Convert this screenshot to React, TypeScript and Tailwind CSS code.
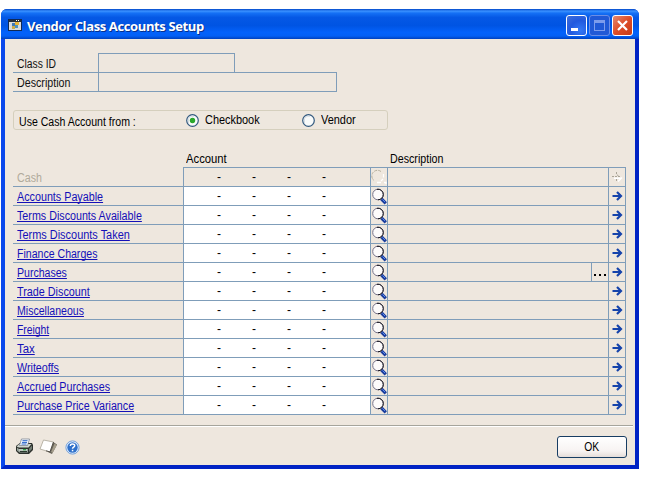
import React from "react";

const rows: { label: string; scale: string }[] = [
  { label: "Cash", scale: "scale-x-[0.89]" },
  { label: "Accounts Payable", scale: "scale-x-[0.896]" },
  { label: "Terms Discounts Available", scale: "scale-x-[0.893]" },
  { label: "Terms Discounts Taken", scale: "scale-x-[0.911]" },
  { label: "Finance Charges", scale: "scale-x-[0.88]" },
  { label: "Purchases", scale: "scale-x-[0.88]" },
  { label: "Trade Discount", scale: "scale-x-[0.9]" },
  { label: "Miscellaneous", scale: "scale-x-[0.88]" },
  { label: "Freight", scale: "scale-x-[0.86]" },
  { label: "Tax", scale: "scale-x-[0.95]" },
  { label: "Writeoffs", scale: "scale-x-[0.894]" },
  { label: "Accrued Purchases", scale: "scale-x-[0.894]" },
  { label: "Purchase Price Variance", scale: "scale-x-[0.893]" },
];

function Label({ text, scale = "scale-x-[0.89]" }: { text: string; scale?: string }) {
  return <span className={`inline-block origin-left ${scale}`}>{text}</span>;
}

function WindowIcon() {
  return (
    <svg width="14" height="12" viewBox="0 0 14 12" shapeRendering="crispEdges">
      <rect width="14" height="12" fill="#102a55" />
      <rect x="1" y="1" width="12" height="10" fill="#d8dce0" />
      <rect x="1" y="1" width="12" height="2" fill="#26303c" />
      <rect x="8" y="1" width="1" height="1" fill="#fff" />
      <rect x="10" y="1" width="1" height="1" fill="#fff" />
      <rect x="7" y="3" width="4" height="3" fill="#e8b437" />
      <rect x="4" y="4" width="3" height="3" fill="#3b78b8" />
      <rect x="4" y="7" width="3" height="3" fill="#c8ab4c" />
      <rect x="7" y="6" width="3" height="3" fill="#4b91c0" />
    </svg>
  );
}

function Lens({ disabled }: { disabled: boolean }) {
  if (disabled) {
    return (
      <svg width="16" height="18" viewBox="0 0 16 18" fill="none">
        <path d="M10 3.500A5.500 5.500 0 1 0 3 12.500" stroke="#b5ae9c" strokeDasharray="3 1" />
        <path d="M12.500 6v3.500M12 11l-2 2M6 14.500h4M13 14.500h2v1.500" stroke="#fff" strokeWidth="1.300" />
      </svg>
    );
  }
  return (
    <svg width="16" height="18" viewBox="0 0 16 18" fill="none">
      <path d="M10.500 12l4.300 4.300" stroke="#1b3d9c" strokeWidth="3.200" />
      <circle cx="7" cy="7.500" r="5.300" fill="#fdfbfb" stroke="#77738a" />
      <path d="M6 2.300a5.300 5.300 0 0 1 6.300 5.200a5.300 5.300 0 0 1-5.300 5.300" stroke="#15151d" />
      <path d="M11.500 12.500l2.500 2.500" stroke="#5b8cf0" strokeWidth="1" />
    </svg>
  );
}

function Arrow({ disabled }: { disabled: boolean }) {
  if (disabled) {
    return (
      <svg width="11" height="12" viewBox="0 0 11 12" fill="none">
        <path d="M2 7.200h7M6 10.500l4-4" stroke="#fff" strokeWidth="1.500" />
        <path d="M0 5.500h8M4.500 1v2.500l3 2M4.500 10v-2" stroke="#aaa598" strokeDasharray="2 1" />
      </svg>
    );
  }
  return (
    <svg width="11" height="10" viewBox="0 0 11 10" fill="none">
      <path d="M.5 5h8.500M5 1l4 4l-4 4" stroke="#1543ab" strokeWidth="2.200" />
    </svg>
  );
}

function Printer() {
  return (
    <svg width="19" height="17" viewBox="0 0 19 17">
      <path d="M1 8l4-3h12l1 2v5l-4 4H4l-3-3z" fill="#2c302c" />
      <path d="M1.500 8.500l3-2.500h12l-3 3.500H4z" fill="#cfd5cd" />
      <path d="M6.500 1h8l-2 6.500h-8z" fill="#f7faff" stroke="#5b6878" strokeWidth=".6" />
      <path d="M7.500 2.700h5M7 4.400h5M6.500 6h5" stroke="#2462c9" />
      <path d="M2 9.500l2 1.500h9v3.500H4.500L2 12.500z" fill="#98a39b" />
      <path d="M14 10.500l3-3v3.500l-3 3z" fill="#727d74" />
      <path d="M4 12h8" stroke="#e3e8e2" />
      <path d="M5 13.500h7" stroke="#2a382e" />
      <rect x="8" y="11" width="3" height="1.300" fill="#2ea647" />
    </svg>
  );
}

function Note() {
  return (
    <svg width="19" height="16" viewBox="0 0 19 16">
      <path d="M14 3l4 2.500l-5 9.500l-4-2z" fill="#625e54" />
      <path d="M15.500 4.500l2.500 1.500l-4.500 8l-1.500-1z" fill="#a59e8c" />
      <path d="M4.500 1l10 2l-3.500 10l-10-3z" fill="#fff" stroke="#a9a496" strokeWidth=".8" />
      <path d="M14.500 3l-3.500 10l-4-1.200" fill="none" stroke="#37342e" strokeWidth=".8" />
    </svg>
  );
}

function Help() {
  return (
    <svg width="15" height="15" viewBox="0 0 15 15" fill="none">
      <circle cx="7.500" cy="7.500" r="6.600" fill="#e4effc" stroke="#75a2dc" />
      <circle cx="7.500" cy="7.500" r="5.200" fill="#2f71cb" />
      <path d="M5.300 6c0-2.800 4.400-2.700 4.400-.3c0 1.500-2.200 1.300-2.200 3" stroke="#fff" strokeWidth="1.500" />
      <rect x="6.800" y="9.800" width="1.500" height="1.500" fill="#fff" />
    </svg>
  );
}

function TitleBar() {
  return (
    <header className="flex h-[30px] items-center bg-[linear-gradient(180deg,#0046c8_0%,#3a91ff_7%,#1470f5_14%,#0558e5_28%,#0054e3_55%,#0362fb_78%,#0360f5_90%,#0040bd_100%)] pr-[6px] pl-[7px]">
      <div className="mt-[2px]"><WindowIcon /></div>
      <h1 className="mt-[4px] ml-[5px] font-['Open_Sans','Noto_Sans',sans-serif] text-[13px] leading-[16px] font-bold tracking-[-0.37px] whitespace-nowrap text-white [text-shadow:1px_1px_0_#06308c]">
        Vendor Class Accounts Setup
      </h1>
      <div className="mt-[3px] ml-auto flex gap-[2px]">
        <div className="flex h-[21px] w-[21px] items-end rounded-[3px] border border-white bg-[radial-gradient(circle_at_70%_75%,#3478f5,#2159de_50%,#416fd9)]">
          <span className="mb-[4px] ml-[4px] h-[3px] w-[7px] bg-white" />
        </div>
        <div className="flex h-[21px] w-[21px] items-center justify-center rounded-[3px] border border-[#6c8ee5] bg-[#2159d6]">
          <span className="h-[11px] w-[11px] border border-t-[3px] border-[#7d9cec]" />
        </div>
        <div className="flex h-[21px] w-[21px] items-center justify-center rounded-[3px] border border-white bg-[linear-gradient(135deg,#e38a72,#de4d27_50%,#c63b18)]">
          <svg width="13" height="13" viewBox="0 0 13 13">
            <path d="M2 2l9 9M11 2l-9 9" stroke="#fff" strokeWidth="2.200" />
          </svg>
        </div>
      </div>
    </header>
  );
}

function Radio({ checked }: { checked: boolean }) {
  return (
    <svg width="13" height="13" viewBox="0 0 13 13">
      <circle cx="6.500" cy="6.500" r="5.800" fill="#f8fafa" stroke="#31587e" strokeWidth="1.200" />
      <path d="M2.500 9V4.500L5 2.300h3" fill="none" stroke="#d6dde3" />
      {checked && <circle cx="6.500" cy="6.500" r="2.700" fill="#2ba82b" />}
    </svg>
  );
}

export default function App() {
  return (
    <div className="h-[478px] w-[655px] overflow-hidden bg-white pt-[9px] pl-[1px] font-['Liberation_Sans',Arial,sans-serif] text-[12px] leading-[18px] whitespace-nowrap text-black">
      <div className="flex h-[460px] w-[638px] flex-col overflow-hidden rounded-t-[6px] bg-[#0034d0]">
        <TitleBar />
        <main className="flex flex-1 flex-col border-x-4 border-b-4 border-t-0 border-r-[#0023c4] border-b-[#0023c4] border-l-[#0a48ec] bg-[#eee7de]">
          <section className="mt-[14px] ml-[8px] text-[#111]">
            <div className="flex h-[20px]">
              <div className="w-[85px] border-b border-[#7f9db9] pt-[2px] pl-[4px]"><Label text="Class ID" scale="scale-x-[0.86]" /></div>
              <div className="w-[137px] border border-[#7f9db9]" />
              <div className="w-[102px] border-b border-[#7f9db9]" />
            </div>
            <div className="flex h-[19px]">
              <div className="w-[85px] border-b border-[#7f9db9] pt-[1px] pl-[4px]"><Label text="Description" /></div>
              <div className="w-[239px] border border-t-0 border-[#7f9db9]" />
            </div>
          </section>

          <section className="mt-[18px] ml-[8px] flex h-[20px] w-[375px] items-center rounded-[3px] border border-[#d5cfbd]">
            <span className="mt-[3px] w-[167px] pl-[5px]"><Label text="Use Cash Account from :" scale="scale-x-[0.88]" /></span>
            <span className="ml-[5px] flex w-[116px] items-center gap-[6px]"><Radio checked={true} /><Label text="Checkbook" scale="scale-x-[0.91]" /></span>
            <span className="flex items-center gap-[6px]"><Radio checked={false} /><Label text="Vendor" scale="scale-x-[0.91]" /></span>
          </section>

          <section className="mt-[20px] ml-[8px] w-[613px]">
            <div className="flex h-[17px]">
              <span className="w-[204px] pl-[173px]"><Label text="Account" scale="scale-x-[0.94]" /></span>
              <span className="ml-[173px]"><Label text="Description" /></span>
            </div>
            {rows.map(({ label, scale }, i) => {
              const top = i === 0 ? "h-[20px] border-t" : "h-[19px]";
              const cell = `${top} border-b border-r border-[#7f9db9]`;
              return (
                <div key={label} className="flex">
                  <div className={`w-[170px] border-b border-[#7f9db9] pl-[4px] ${i === 0 ? "h-[20px] pt-[2px] text-[#b0aa9b]" : "h-[19px] pt-[1px] text-[#1410b8] underline decoration-1 underline-offset-[1px] [text-decoration-skip-ink:none]"}`}>
                    <span className={`inline-block origin-left [text-decoration:inherit] ${scale}`}>{label}</span>
                  </div>
                  <div className={`${cell} flex w-[188px] border-l pl-[33px] ${i === 0 ? "" : "bg-white"}`}>
                    <span className="w-[35px]">-</span>
                    <span className="w-[35px]">-</span>
                    <span className="w-[35px]">-</span>
                    <span>-</span>
                  </div>
                  <div className={`${cell} w-[17px]`}><Lens disabled={i === 0} /></div>
                  <div className={`${cell} flex w-[221px] justify-end`}>
                    {i === 5 && (
                      <div className="flex w-[17px] items-end justify-center gap-[3px] border-l border-[#7f9db9] pb-[5px]">
                        <i className="h-[2px] w-[2px] bg-black" /><i className="h-[2px] w-[2px] bg-black" /><i className="h-[2px] w-[2px] bg-black" />
                      </div>
                    )}
                  </div>
                  <div className={`${cell} flex w-[17px] items-center justify-center`}><Arrow disabled={i === 0} /></div>
                </div>
              );
            })}
          </section>

          <footer className="mt-auto mr-[2px] flex h-[40px] border-t border-[#a6a59c] shadow-[inset_0_1px_0_#fff]">
            <div className="flex items-start pt-[12px] pl-[10px]">
              <Printer />
              <div className="mt-[1px] ml-[5px]"><Note /></div>
              <div className="mt-[2px] ml-[7px]"><Help /></div>
            </div>
            <button className="mt-[10px] mr-[6px] ml-auto h-[22px] w-[70px] rounded-[3px] border border-[#173d63] bg-[linear-gradient(#ffffff,#f7f3f2_70%,#e5ddd9)] leading-[20px]"><span className="inline-block scale-x-[0.86]">OK</span></button>
          </footer>
        </main>
      </div>
    </div>
  );
}
